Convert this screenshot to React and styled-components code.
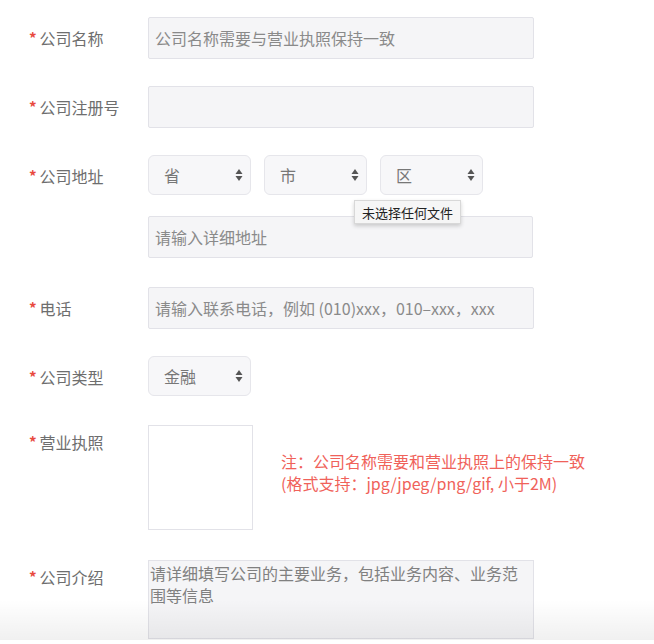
import React from 'react';
import styled, { createGlobalStyle } from 'styled-components';

const GlobalStyle = createGlobalStyle`
    body {
        margin: 0;
        background: #fff;
        font-family: "Noto Sans CJK SC", "Noto Sans", sans-serif;
    }
`;

function Arrows() {
    return (
        <svg width="8" height="14" viewBox="0 0 8 14">
            <path d="M4 1 L7.5 6 L0.5 6 Z" fill="#555" />
            <path d="M4 13 L7.5 8 L0.5 8 Z" fill="#555" />
        </svg>
    );
}

function Select({ value }) {
    return (
        <SelectBox>
            <span>{value}</span>
            <Arrows />
        </SelectBox>
    );
}

function Row({ label, top, tall, children }) {
    return (
        <FormRow top={top}>
            <Label tall={tall}>
                <Star>*</Star>
                {label}
            </Label>
            <Field>{children}</Field>
        </FormRow>
    );
}

export default function App() {
    return (
        <Page>
            <GlobalStyle />
            <Row label="公司名称" top={17}>
                <Input>公司名称需要与营业执照保持一致</Input>
            </Row>
            <Row label="公司注册号" top={27}>
                <Input />
            </Row>
            <Row label="公司地址" top={27}>
                <Selects>
                    <Select value="省" />
                    <Select value="市" />
                    <Select value="区" />
                    <Tooltip>未选择任何文件</Tooltip>
                </Selects>
                <Input narrow>请输入详细地址</Input>
            </Row>
            <Row label="电话" top={29}>
                <Input>请输入联系电话，例如 (010)xxx，010–xxx，xxx</Input>
            </Row>
            <Row label="公司类型" top={27}>
                <Select value="金融" />
            </Row>
            <Row label="营业执照" top={27} tall>
                <Upload>
                    <UploadBox />
                    <Note>
                        注：公司名称需要和营业执照上的保持一致
                        <br />
                        (格式支持：jpg/jpeg/png/gif, 小于2M)
                    </Note>
                </Upload>
            </Row>
            <Row label="公司介绍" top={30} tall>
                <TextArea>请详细填写公司的主要业务，包括业务内容、业务范围等信息</TextArea>
            </Row>
            <BottomShade />
        </Page>
    );
}

const Page = styled.div`
    width: 654px;
    height: 644px;
    overflow: hidden;
    position: relative;
    box-sizing: border-box;
`;

const FormRow = styled.div`
    display: flex;
    align-items: flex-start;
    margin-top: ${p => p.top}px;
`;

const Label = styled.div`
    width: 148px;
    box-sizing: border-box;
    padding-left: 29px;
    height: ${p => (p.tall ? 34 : 42)}px;
    display: flex;
    align-items: center;
    font-size: 16px;
    color: #6e6e6e;
    white-space: nowrap;
`;

const Star = styled.span`
    color: #e84a3f;
    font-size: 15px;
    font-weight: bold;
    margin-right: 3px;
    position: relative;
    top: -1px;
`;

const Field = styled.div`
    display: flex;
    flex-direction: column;
`;

const Input = styled.div`
    width: 386px;
    height: 42px;
    box-sizing: border-box;
    padding: 0 6px;
    display: flex;
    align-items: center;
    background: #f5f5f7;
    border: 1px solid #e2e2e8;
    border-radius: 2px;
    font-size: 16px;
    color: #8a8a8a;
    white-space: nowrap;
    ${p => p.narrow && 'width: 385px; margin-top: 21px;'}
`;

const Selects = styled.div`
    display: flex;
    gap: 13px;
    position: relative;
`;

const SelectBox = styled.div`
    width: 103px;
    height: 40px;
    box-sizing: border-box;
    padding: 0 7px 0 15px;
    display: flex;
    align-items: center;
    justify-content: space-between;
    background: #f7f7f9;
    border: 1px solid #e6e6eb;
    border-radius: 6px;
    font-size: 16px;
    color: #777;
`;

const Tooltip = styled.div`
    position: absolute;
    left: 206px;
    top: 45px;
    height: 22px;
    padding: 0 7px;
    display: flex;
    align-items: center;
    background: #f6f6f6;
    border: 1px solid #d8d8d8;
    box-shadow: 0 2px 4px rgba(0, 0, 0, 0.18);
    font-size: 13px;
    color: #222;
    white-space: nowrap;
    z-index: 2;
`;

const Upload = styled.div`
    display: flex;
    align-items: center;
    gap: 28px;
`;

const UploadBox = styled.div`
    width: 105px;
    height: 105px;
    box-sizing: border-box;
    background: #fff;
    border: 1px solid #e2e2e8;
`;

const Note = styled.div`
    font-size: 16px;
    line-height: 22px;
    color: #f0625a;
    margin-top: -12px;
`;

const TextArea = styled.div`
    width: 386px;
    height: 79px;
    box-sizing: border-box;
    padding: 1px 1px;
    background: #f5f5f7;
    border: 1px solid #e2e2e8;
    font-size: 16px;
    line-height: 22px;
    color: #808080;
`;

const BottomShade = styled.div`
    position: absolute;
    left: 0;
    right: 0;
    top: 600px;
    height: 40px;
    background: linear-gradient(rgba(0, 0, 0, 0), rgba(0, 0, 0, 0.06));
    pointer-events: none;
`;
